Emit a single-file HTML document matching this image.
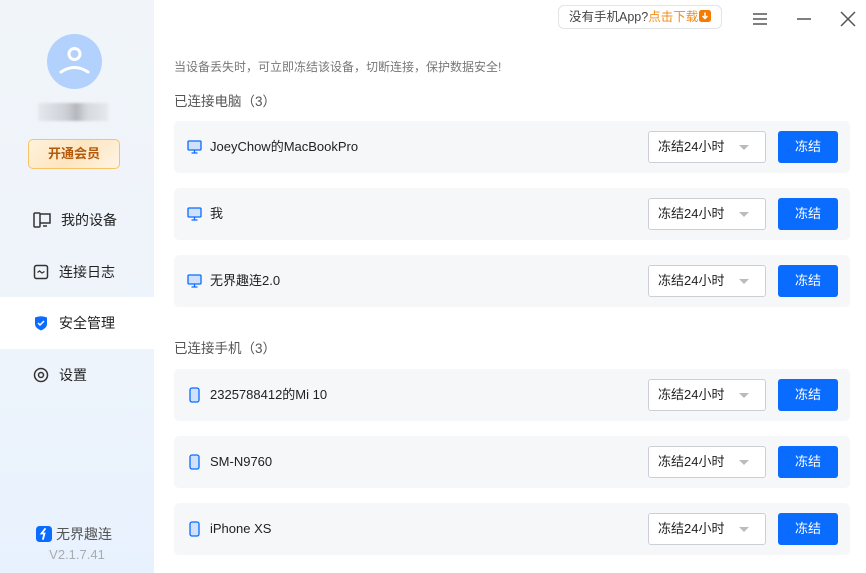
<!DOCTYPE html>
<html><head><meta charset="utf-8">
<style>
*{margin:0;padding:0;box-sizing:border-box}
body{width:866px;height:573px;overflow:hidden;background:#fff;font-family:"Liberation Sans","Noto Sans CJK SC",sans-serif;position:relative;color:#222}
.side{position:absolute;left:0;top:0;width:154px;height:573px;background:linear-gradient(180deg,#f1f5f9 0%,#eef4fb 60%,#e8f2fe 100%)}
.av{position:absolute;left:47px;top:34px;width:55px;height:55px;border-radius:50%;background:#b3d1fd}
.blur{position:absolute;left:38px;top:103px;width:70px;height:18px;background:linear-gradient(90deg,#e6e9ee,#cdd0d6 40%,#b5b8bd 55%,#d6d9de 70%,#e6e9ee);filter:blur(1px)}
.vip{position:absolute;left:28px;top:139px;width:92px;height:30px;border:1.5px solid #f8c364;border-radius:5px;background:linear-gradient(135deg,#fff2dc,#fde5c0 50%,#fff4e4);color:#b45a0a;font-size:13px;font-weight:bold;text-align:center;line-height:27px}
.mi{position:absolute;left:0;width:154px;height:52px;display:flex;align-items:center;padding-left:33px;font-size:14px;color:#222}
.mi svg{margin-right:10px}
.mi.act{background:#fff}
.logo{position:absolute;left:36px;top:524px;display:flex;align-items:center;font-size:14px;color:#555}
.ver{position:absolute;left:0;width:154px;top:547px;text-align:center;font-size:13px;color:#a8abb0}
.pill{position:absolute;left:558px;top:5px;width:164px;height:24px;border:1px solid #e2e4e8;border-radius:6px;font-size:12.5px;color:#444;line-height:23px;padding-left:10px}
.pill b{font-weight:normal;color:#f08c1a}
.tip{position:absolute;left:174px;top:58px;font-size:12px;color:#777}
.h{position:absolute;left:174px;font-size:13.5px;color:#555}
.row{position:absolute;left:174px;width:676px;height:52px;background:#f6f7f9;border-radius:5px}
.row .ic{position:absolute;left:13px;top:19px}
.row .n{position:absolute;left:36px;top:0;line-height:52px;font-size:13px;color:#222}
.sel{position:absolute;left:474px;top:10px;width:118px;height:32px;border:1px solid #ccd0d6;background:#fff;border-radius:3px;font-size:13px;line-height:30px;padding-left:9px;color:#222}
.sel:after{content:"";position:absolute;right:16px;top:13px;border:5px solid transparent;border-top:5px solid #bbb}
.btn{position:absolute;left:604px;top:10px;width:60px;height:32px;background:#0a6cff;border-radius:3px;color:#fff;font-size:13px;text-align:center;line-height:32px}
</style></head><body>
<div class="side">
 <div class="av"><svg width="55" height="55" viewBox="0 0 55 55"><circle cx="27.5" cy="20" r="5.5" fill="none" stroke="#fff" stroke-width="3"/><path d="M14 38 Q27.5 29 41 38" fill="none" stroke="#fff" stroke-width="3" stroke-linecap="round"/></svg></div>
 <div class="blur"></div>
 <div class="vip">开通会员</div>
 <div class="mi" style="top:194px"><svg width="18" height="16" viewBox="0 0 18 16"><rect x="1" y="1" width="6" height="14" rx="1" fill="none" stroke="#333" stroke-width="1.5"/><path d="M7 2H17V11H7M10 14H14" fill="none" stroke="#333" stroke-width="1.5"/></svg>我的设备</div>
 <div class="mi" style="top:246px"><svg width="16" height="16" viewBox="0 0 16 16"><rect x="1.5" y="1.5" width="13" height="13" rx="2" fill="none" stroke="#333" stroke-width="1.5"/><path d="M4.5 8.5L6.5 7L9 9L11.5 7.5" fill="none" stroke="#333" stroke-width="1.3"/></svg>连接日志</div>
 <div class="mi act" style="top:297px"><svg width="16" height="16" viewBox="0 0 16 16"><path d="M2 2.5Q8 0 14 2.5V9Q14 13 8 15.5Q2 13 2 9Z" fill="#0a6cff"/><path d="M5 8l2 2 4-4" fill="none" stroke="#fff" stroke-width="1.5"/></svg>安全管理</div>
 <div class="mi" style="top:349px"><svg width="16" height="16" viewBox="0 0 16 16"><circle cx="8" cy="8" r="6.5" fill="none" stroke="#333" stroke-width="1.5"/><circle cx="8" cy="8" r="2.5" fill="none" stroke="#333" stroke-width="1.5"/></svg>设置</div>
 <div class="logo"><svg width="16" height="16" viewBox="0 0 16 16" style="margin-right:4px"><rect width="16" height="16" rx="3.5" fill="#0a6cff"/><path d="M9 3L5.5 7.5H8.5L7 13" fill="none" stroke="#fff" stroke-width="1.8" stroke-linecap="round"/></svg>无界趣连</div>
 <div class="ver">V2.1.7.41</div>
</div>
<div class="pill">没有手机App?<b>点击下载</b><svg width="12" height="12" viewBox="0 0 12 12" style="vertical-align:-1px;margin-left:1px"><rect width="12" height="12" rx="2.5" fill="#f57c00"/><path d="M6 2.5V8M3.5 6L6 8.5L8.5 6" fill="none" stroke="#fff" stroke-width="1.5"/></svg></div>
<svg style="position:absolute;left:752px;top:12px" width="16" height="14"><path d="M1 2H15M1 7H15M1 12H15" stroke="#555" stroke-width="1.5"/></svg>
<svg style="position:absolute;left:796px;top:12px" width="16" height="14"><path d="M1 7H15" stroke="#555" stroke-width="1.5"/></svg>
<svg style="position:absolute;left:840px;top:11px" width="16" height="16"><path d="M1 1L15 15M15 1L1 15" stroke="#555" stroke-width="1.5"/></svg>
<div class="tip">当设备丢失时，可立即冻结该设备，切断连接，保护数据安全!</div>
<div class="h" style="top:90px">已连接电脑（3）</div>
<div class="h" style="top:337px">已连接手机（3）</div>

<div class="row" style="top:121px"><svg class="ic" width="15" height="14" viewBox="0 0 15 14"><rect x="1" y="1" width="13" height="9" rx="1" fill="#cfe1fd" stroke="#0a6cff" stroke-width="1.3"/><path d="M4.5 13H10.5M7.5 10V13" stroke="#0a6cff" stroke-width="1.3"/></svg><div class="n">JoeyChow的MacBookPro</div><div class="sel">冻结24小时</div><div class="btn">冻结</div></div>
<div class="row" style="top:188px"><svg class="ic" width="15" height="14" viewBox="0 0 15 14"><rect x="1" y="1" width="13" height="9" rx="1" fill="#cfe1fd" stroke="#0a6cff" stroke-width="1.3"/><path d="M4.5 13H10.5M7.5 10V13" stroke="#0a6cff" stroke-width="1.3"/></svg><div class="n">我</div><div class="sel">冻结24小时</div><div class="btn">冻结</div></div>
<div class="row" style="top:255px"><svg class="ic" width="15" height="14" viewBox="0 0 15 14"><rect x="1" y="1" width="13" height="9" rx="1" fill="#cfe1fd" stroke="#0a6cff" stroke-width="1.3"/><path d="M4.5 13H10.5M7.5 10V13" stroke="#0a6cff" stroke-width="1.3"/></svg><div class="n">无界趣连2.0</div><div class="sel">冻结24小时</div><div class="btn">冻结</div></div>

<div class="row" style="top:369px"><svg class="ic" style="left:15px;top:18px" width="11" height="16" viewBox="0 0 11 16"><rect x="1" y="1" width="9" height="14" rx="2" fill="#cfe1fd" stroke="#0a6cff" stroke-width="1.3"/></svg><div class="n">2325788412的Mi 10</div><div class="sel">冻结24小时</div><div class="btn">冻结</div></div>
<div class="row" style="top:436px"><svg class="ic" style="left:15px;top:18px" width="11" height="16" viewBox="0 0 11 16"><rect x="1" y="1" width="9" height="14" rx="2" fill="#cfe1fd" stroke="#0a6cff" stroke-width="1.3"/></svg><div class="n">SM-N9760</div><div class="sel">冻结24小时</div><div class="btn">冻结</div></div>
<div class="row" style="top:503px"><svg class="ic" style="left:15px;top:18px" width="11" height="16" viewBox="0 0 11 16"><rect x="1" y="1" width="9" height="14" rx="2" fill="#cfe1fd" stroke="#0a6cff" stroke-width="1.3"/></svg><div class="n">iPhone XS</div><div class="sel">冻结24小时</div><div class="btn">冻结</div></div>
</body></html>
